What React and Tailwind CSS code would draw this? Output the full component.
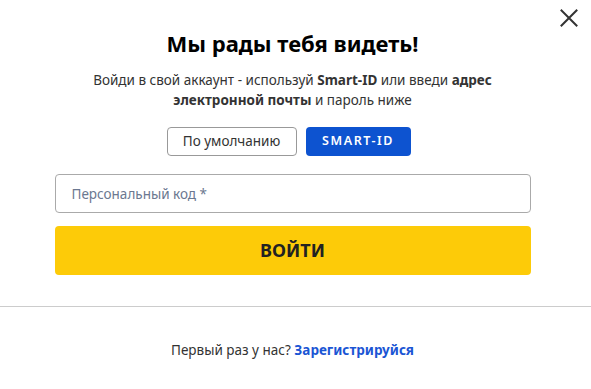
import React, { useState } from "react";

const App = () => {
  const [code, setCode] = useState("");
  const [mode, setMode] = useState("smart");

  return (
    <div
      className="relative w-[591px] h-[389px] bg-white text-[#333] overflow-hidden"
      style={{ fontFamily: '"Noto Sans", "Open Sans", sans-serif' }}
    >
      <button
        type="button"
        className="absolute right-[13px] top-[9px] w-[18px] h-[18px] text-[#333]"
        aria-label="Закрыть"
      >
        <svg viewBox="0 0 18 18" className="w-[18px] h-[18px]">
          <path
            d="M1.5 1.5 L16.5 16.5 M16.5 1.5 L1.5 16.5"
            stroke="currentColor"
            strokeWidth="2"
            strokeLinecap="square"
          />
        </svg>
      </button>

      <div className="flex flex-col items-center pt-[27px] pr-[6px]">
        <h2 className="text-[22px] leading-[32px] font-bold text-black">
          Мы рады тебя видеть!
        </h2>
        <p className="mt-[11px] w-[420px] text-center text-[13.5px] leading-[20px] text-[#333]">
          Войди в свой аккаунт - используй <b>Smart-ID</b> или введи{" "}
          <b>адрес электронной почты</b> и пароль ниже
        </p>

        <div className="mt-[17px] mr-[8px] flex gap-[9px]">
          <button
            type="button"
            onClick={() => setMode("default")}
            className="w-[130px] h-[29px] rounded-[4px] border border-[#999] bg-white text-[13.5px] text-[#333]"
          >
            По умолчанию
          </button>
          <button
            type="button"
            onClick={() => setMode("smart")}
            className="w-[105px] h-[29px] rounded-[4px] bg-[#0d53d0] text-white text-[12.5px] font-semibold tracking-[1.6px]"
          >
            SMART-ID
          </button>
        </div>

        <div className="mt-[18px] w-[476px] flex flex-col gap-[13px]">
          <input
            type="text"
            value={code}
            onChange={(e) => setCode(e.target.value)}
            placeholder="Персональный код *"
            className="w-full h-[39px] rounded-[4px] border border-[#aaa] px-[16px] text-[13.5px] placeholder:text-[#6b7890] outline-none"
          />
          <button
            type="submit"
            className="w-full h-[49px] rounded-[4px] bg-[#fdcb08] text-[18px] font-bold text-[#222]"
          >
            ВОЙТИ
          </button>
        </div>
      </div>

      <div className="mt-[31px] border-t border-[#ccc]" />

      <div className="pt-[33px] pr-[6px] text-center text-[13.5px] text-[#333]">
        Первый раз у нас?{" "}
        <a href="#" className="font-bold text-[#1a55d4]">
          Зарегистрируйся
        </a>
      </div>
    </div>
  );
};

export default App;
